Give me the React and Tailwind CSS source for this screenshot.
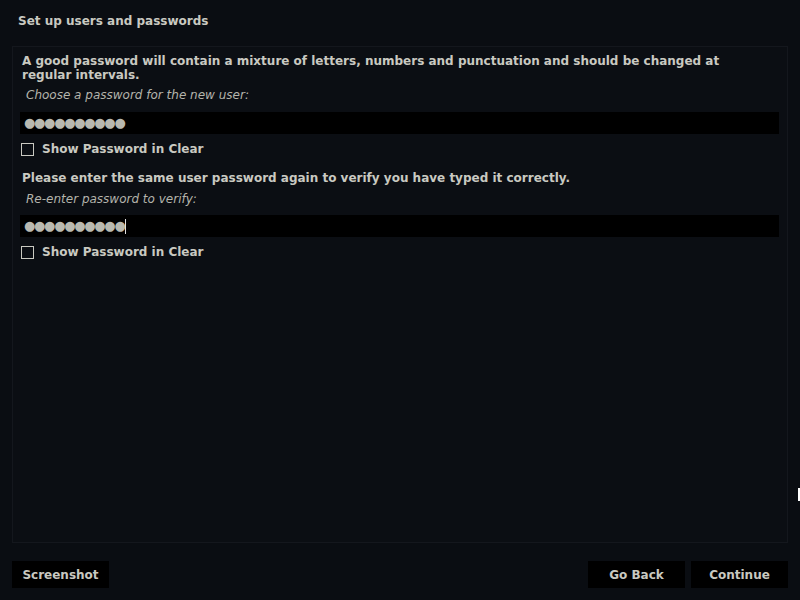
export default function App() {
  const font = { fontFamily: '"DejaVu Sans", sans-serif' };
  return (
    <div className="relative w-[800px] h-[600px] bg-[#0a0d12] text-[#c9c9c1] flex flex-col" style={font}>
      <div className="h-[46px] pl-[18px] pt-[14px] text-[12px] font-bold leading-[15px]">Set up users and passwords</div>
      <div className="mx-[12px] h-[497px] bg-[#0b0e13] border border-[#14171d] pl-[7px] pr-[8px] pt-[7px]">
        <div className="pl-[2px] w-[742px] text-[12px] font-bold leading-[14px]">
          A good password will contain a mixture of letters, numbers and punctuation and should be changed at regular intervals.
        </div>
        <div className="pl-[6px] mt-[6px] text-[12px] italic text-[#b4b4ac] leading-[15px]">Choose a password for the new user:</div>
        <div className="mt-[9px] h-[22px] bg-black flex items-center pl-[4px] text-[#b9b9b0] text-[13px] tracking-[-1.3px]">●●●●●●●●●●</div>
        <div className="mt-[8px] flex items-center gap-[8px] pl-[1px]">
          <div className="w-[13px] h-[13px] border border-[#c9c9c1]"></div>
          <span className="text-[12px] font-bold leading-[15px]">Show Password in Clear</span>
        </div>
        <div className="pl-[2px] mt-[14px] text-[12px] font-bold leading-[15px]">
          Please enter the same user password again to verify you have typed it correctly.
        </div>
        <div className="pl-[6px] mt-[6px] text-[12px] italic text-[#b4b4ac] leading-[15px]">Re-enter password to verify:</div>
        <div className="mt-[8px] h-[22px] bg-black flex items-center pl-[4px] text-[#b9b9b0] text-[13px] tracking-[-1.3px]">
          ●●●●●●●●●●<span className="inline-block w-[1px] h-[15px] bg-[#e0e0e0] ml-[1px]"></span>
        </div>
        <div className="mt-[8px] flex items-center gap-[8px] pl-[1px]">
          <div className="w-[13px] h-[13px] border border-[#c9c9c1]"></div>
          <span className="text-[12px] font-bold leading-[15px]">Show Password in Clear</span>
        </div>
      </div>
      <div className="flex mt-[18px] px-[12px]">
        <button className="w-[97px] h-[27px] bg-black text-[12px] font-bold text-[#c9c9c1]">Screenshot</button>
        <div className="flex-1"></div>
        <button className="w-[97px] h-[27px] bg-black text-[12px] font-bold text-[#c9c9c1]">Go Back</button>
        <button className="ml-[6px] w-[97px] h-[27px] bg-black text-[12px] font-bold text-[#c9c9c1]">Continue</button>
      </div>
      <div className="absolute left-[798px] top-[488px] w-[4px] h-[13px] border-2 border-white"></div>
    </div>
  );
}
